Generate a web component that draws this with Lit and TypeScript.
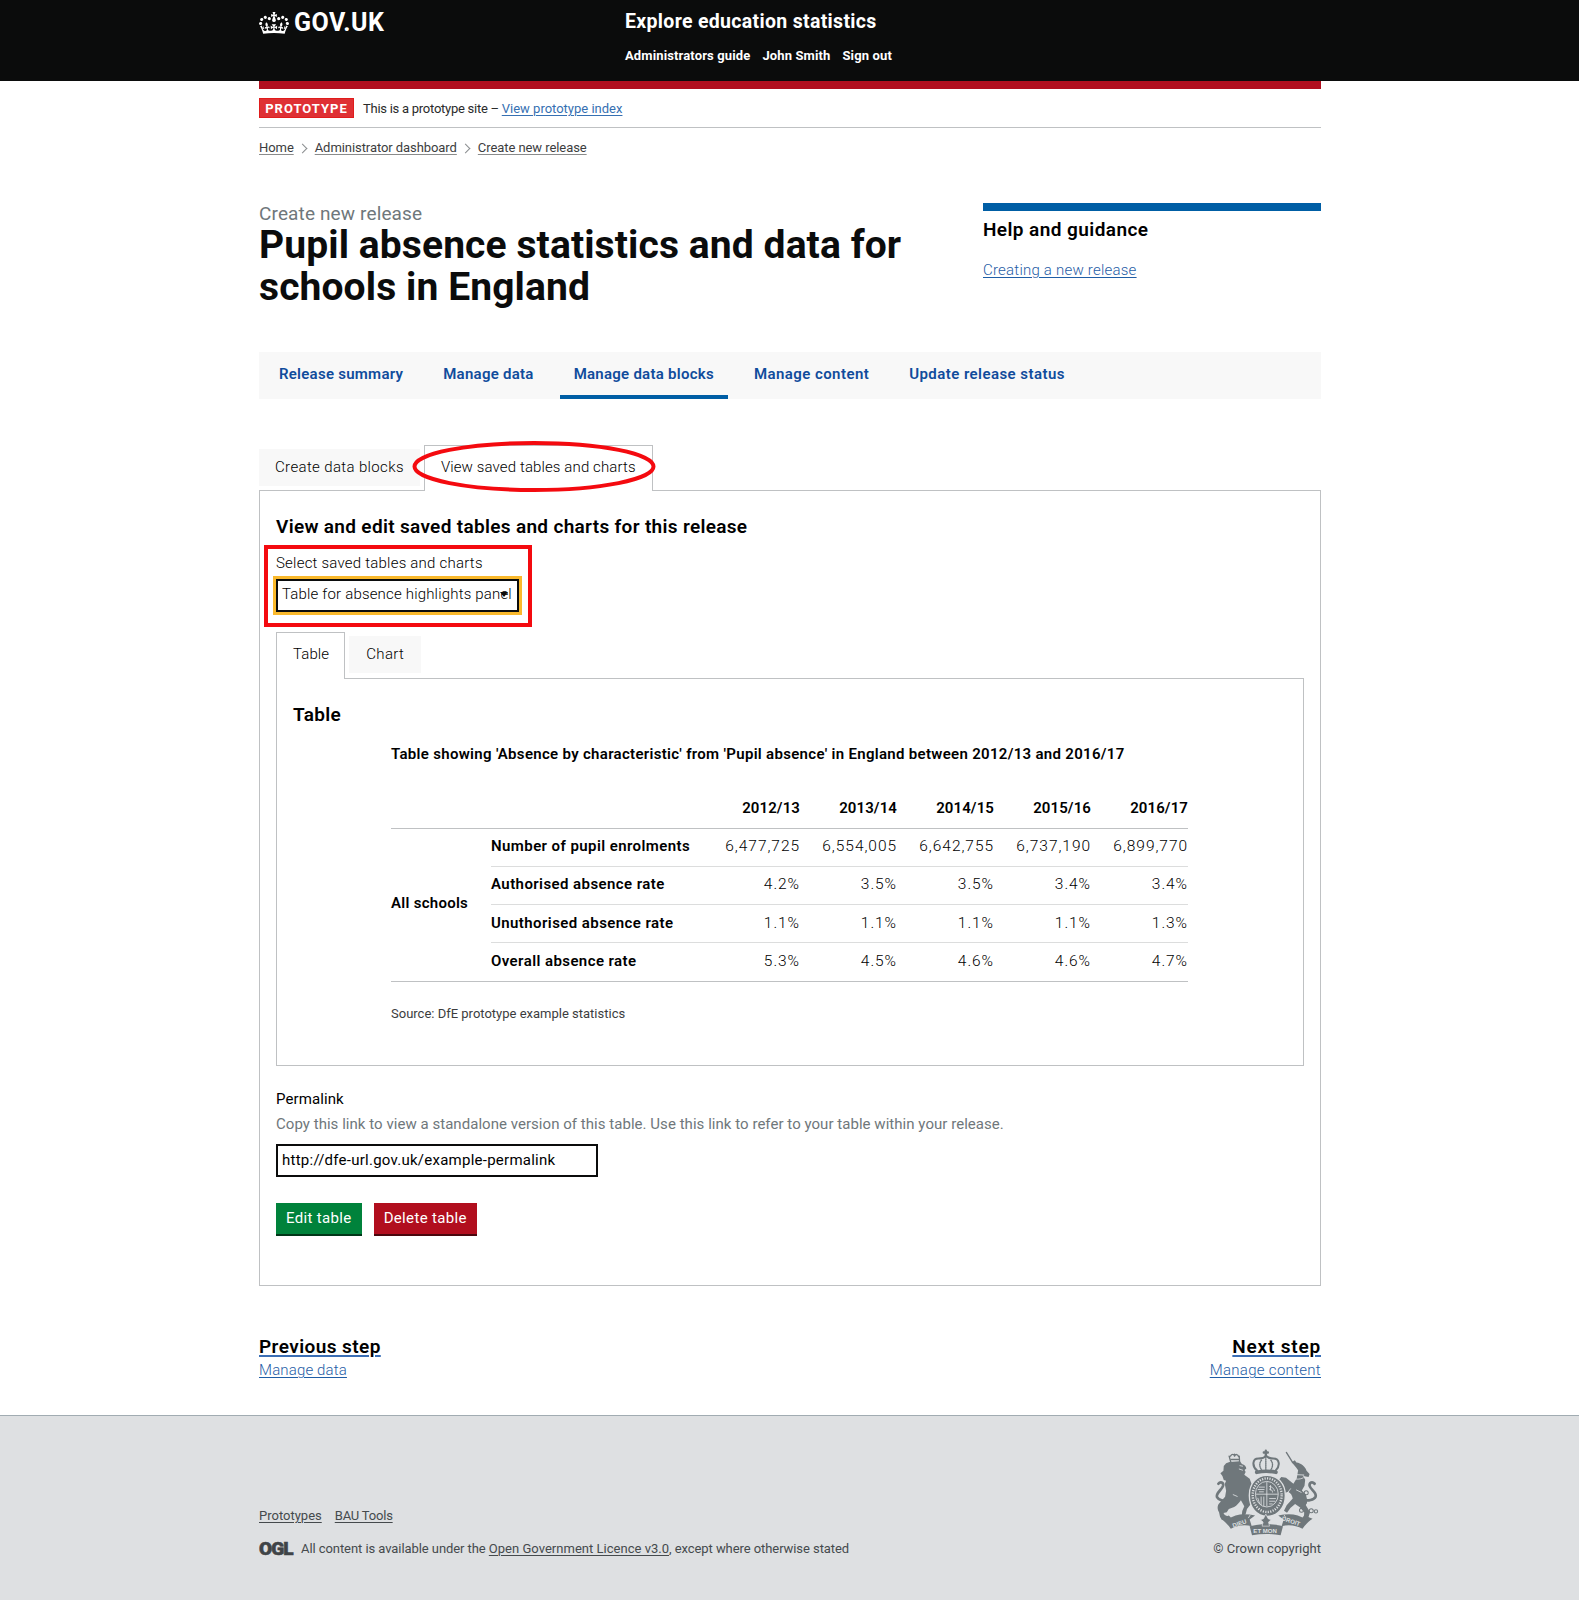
import { LitElement, html, css, svg } from "lit";
import { customElement } from "lit/decorators.js";

const YEARS = ["2012/13", "2013/14", "2014/15", "2015/16", "2016/17"];
const ROWS: [string, string[]][] = [
  ["Number of pupil enrolments", ["6,477,725", "6,554,005", "6,642,755", "6,737,190", "6,899,770"]],
  ["Authorised absence rate", ["4.2%", "3.5%", "3.5%", "3.4%", "3.4%"]],
  ["Unuthorised absence rate", ["1.1%", "1.1%", "1.1%", "1.1%", "1.3%"]],
  ["Overall absence rate", ["5.3%", "4.5%", "4.6%", "4.6%", "4.7%"]],
];
const NAV: [string, string][] = [["Release summary", ""], ["Manage data", ""], ["Manage data blocks", "on"], ["Manage content", "loose"], ["Update release status", "loose"]];

const crown = svg`<path fill="#fff" fill-rule="evenodd" d="M25 30.2c3.5 1.5 7.7-.2 9.1-3.7 1.5-3.6-.2-7.8-3.9-9.2-3.6-1.4-7.6.3-9.1 3.9-1.4 3.5.3 7.5 3.9 9zM9 39.5c3.6 1.5 7.8-.2 9.2-3.7 1.5-3.6-.2-7.8-3.9-9.1-3.6-1.5-7.6.2-9.1 3.8-1.4 3.5.3 7.5 3.8 9zM4.4 57.2c3.5 1.5 7.7-.2 9.1-3.8 1.5-3.6-.2-7.7-3.9-9.1-3.5-1.5-7.6.3-9.1 3.8-1.4 3.5.3 7.6 3.9 9.1zm38.3-21.4c3.5 1.5 7.7-.2 9.1-3.8 1.5-3.6-.2-7.7-3.9-9.1-3.6-1.5-7.6.3-9.1 3.8-1.3 3.6.4 7.7 3.9 9.1zm64.4-5.6c-3.6 1.5-7.8-.2-9.1-3.7-1.5-3.6.2-7.8 3.8-9.2 3.6-1.4 7.7.3 9.2 3.9 1.3 3.5-.4 7.5-3.9 9zm15.9 9.3c-3.6 1.5-7.7-.2-9.1-3.7-1.5-3.6.2-7.8 3.7-9.1 3.6-1.5 7.7.2 9.2 3.8 1.5 3.5-.3 7.5-3.8 9zm4.7 17.7c-3.6 1.5-7.8-.2-9.2-3.8-1.5-3.6.2-7.7 3.9-9.1 3.6-1.5 7.7.3 9.2 3.8 1.3 3.5-.4 7.6-3.9 9.1zM89.3 35.8c-3.6 1.5-7.8-.2-9.2-3.8-1.4-3.6.2-7.7 3.9-9.1 3.6-1.5 7.7.3 9.2 3.8 1.4 3.6-.3 7.7-3.9 9.1zM69.7 17.7l8.9 4.7V9.3l-8.9 2.8c-.2-.3-.5-.6-.9-.9L72.4 0H59.6l3.5 11.2c-.3.3-.6.5-.9.9l-8.8-2.8v13.1l8.8-4.7c.3.3.6.7.9.9l-5 15.4v.1c-.2.8-.4 1.6-.4 2.4 0 4.1 3.1 7.5 7 8.1h.2c.3 0 .7.1 1 .1.4 0 .7 0 1-.1h.2c4-.6 7.1-4.1 7.1-8.1 0-.8-.1-1.7-.4-2.4V34l-5.1-15.4c.4-.2.7-.6 1-.9zM66 92.8c16.9 0 32.8 1.1 47.1 3.2 4-16.9 8.9-26.7 14-33.5l-9.6-3.4c1 4.9 1.1 7.2 0 10.2-1.5-1.4-3-4.3-4.2-8.7L108.6 76c2.8-2 5-3.2 7.5-3.3-4.4 9.4-10 11.9-13.6 11.2-4.3-.8-6.3-4.6-5.6-7.9 1-4.7 5.7-5.9 8-.5 4.3-8.7-3-11.4-7.6-8.8 7.1-7.2 7.9-13.5 2.1-21.1-8 6.1-8.1 12.3-4.5 20.8-4.7-5.4-12.1-2.5-9.5 6.2 3.4-5.2 7.9-2 7.2 3.1-.6 4.3-6.4 7.8-13.5 7.2-10.3-.9-10.9-8-11.2-13.8 2.5-.5 7.1 1.8 11 7.3L80.2 60c-4.1 4.4-8 5.3-12.3 5.4 1.4-4.4 8-11.6 8-11.6H55.5s6.4 7.2 7.9 11.6c-4.2-.1-8-1-12.3-5.4l1.4 16.4c3.9-5.5 8.5-7.7 10.9-7.3-.3 5.8-.9 12.8-11.1 13.8-7.2.6-12.9-2.9-13.5-7.2-.7-5 3.8-8.3 7.1-3.1 2.7-8.7-4.6-11.6-9.4-6.2 3.7-8.5 3.6-14.7-4.6-20.8-5.8 7.6-5 13.9 2.2 21.1-4.7-2.6-11.9.1-7.7 8.8 2.3-5.5 7.1-4.2 8.1.5.7 3.3-1.3 7.1-5.7 7.9-3.5.7-9-1.8-13.5-11.2 2.5.1 4.7 1.3 7.5 3.3l-4.7-15.4c-1.2 4.4-2.7 7.2-4.3 8.7-1.1-3-.9-5.3 0-10.2l-9.5 3.4c5 6.9 9.9 16.7 14 33.5 14.8-2.1 30.8-3.2 47.7-3.2z"/>`;

const crest = svg`
  <g fill="none" stroke="#6f777b" stroke-linecap="round" stroke-linejoin="round">
    <path stroke-width="7" d="M196 60v14M190 65h12"/>
    <path stroke-width="6" d="M170 119c-16-14-14-36 4-36 12 0 20-5 22-8 3 3 10 8 22 8 20 0 21 22 7 36"/>
    <path stroke-width="4" stroke-dasharray="3 3" d="M196 78v38M183 88c-7 8-6 20 0 28M211 88c7 8 6 20 0 28"/>
    <path stroke-width="11" d="M169 124c18-4 39-4 57 0"/>
    <path stroke-width="8" d="M84 206c-12 4-28 2-33-8-5-12 15-22 18-34 2-10-8-14-14-6"/>
    <path stroke-width="8" d="M309 206c12 4 30 0 35-10 4-12-15-20-18-32-1-10 8-14 15-6"/>
    <path stroke-width="4" d="M92 94l-5-18M91 76c4-7 10-7 12 0 3-7 10-6 12 1M103 76v-6M118 94l-1-18M94 86h20"/>
    <path stroke-width="4" d="M257 65l19 30"/>
    <circle cx="311" cy="212" r="6" stroke-width="3"/><circle cx="302" cy="237" r="6" stroke-width="3"/>
    <circle cx="318" cy="246" r="6" stroke-width="3"/><circle cx="331" cy="238" r="6" stroke-width="3"/>
    <circle cx="345" cy="240" r="5" stroke-width="3"/><circle cx="316" cy="185" r="6" stroke-width="3"/>
  </g>
  <g fill="#6f777b">
    <path d="M88 93l31-2 6 8c8 2 13 8 13 14l-5 4 3 6-4 8 16 12 8 22 8 4-4 12-14-6 6 18-6 8 8 14-14 18-4 16-12 6 2-16 6-14-10-18c-6 8-12 16-20 20l-16 6-6 10-10 2 4 6 10 4 2 8-20 2-6-8-3-14c-6-10-5-20 0-26l18-20 3-18-4-20 4-10-7-2-4-12-6-8 9-8 1-14 7-8z"/>
    <path d="M273 94l9-6 5 7c14 2 26 12 30 24l9 10-3 9-12-2-6-4 8 14-2 18-8 14 12 12 4 16-4 16 12 20-6 22h-16l4-10 2-10-14-16-14-10-14 12-10 14-9-6 8-16 18-20c-2-10-6-16-14-20l-16 6-14-4-4-30 14-16 14 2 22 18 10-16 4-24-6-8z"/>
    <path stroke="#dee0e2" stroke-width="4" d="M200 133c31 0 54 24 54 60s-23 62-54 62-53-26-53-62 22-60 53-60z"/>
    <path d="M62 262l24-10 6 6 14-6c18-5 38-4 58 0l-16 12 6 20c-22-6-44-2-62 8-8-12-18-22-30-30z"/>
    <path d="M335 262l-24-10-6 6-14-6c-18-5-38-4-58 0l16 12-6 20c22-6 44-2 62 8 8-12 18-22 30-30z"/>
    <path d="M148 284c30-8 68-8 99 0l-7 27c-28-5-57-5-85 0z"/>
    <path stroke="#dee0e2" stroke-width="2" d="M196 248l7 14 9 3-8 7 3 12h-22l3-12-8-7 9-3z"/>
  </g>
  <g fill="none" stroke="#dee0e2">
    <ellipse cx="199" cy="189" rx="34" ry="38" stroke-width="2.5"/>
    <ellipse cx="200" cy="192" rx="43" ry="50" stroke-width="7" stroke-dasharray="3.5 4"/>
    <path stroke-width="2.5" d="M199 153v72M166 189h66M175 168h18M172 175h20M176 182h14M206 166c8 0 14 6 16 14M206 174c6 0 10 4 10 10M210 162v16M172 200l6 18M182 196v26M190 196v28M206 202h20M206 210h18M206 218h10"/>
    <path stroke-width="2.5" d="M118 104l10 2M116 114l12 4M98 190l14 6M103 232l18-14M270 138c12 8 26 8 38 2M266 130l44 2M286 176l16 8M270 172l-10 14M150 250l-6 10M250 250l6 10"/>
  </g>
  <g class="motto" fill="#dee0e2">
    <text transform="rotate(-18 118 275)" x="96" y="282">DIEU</text>
    <text x="159" y="305">ET MON</text>
    <text transform="rotate(18 272 275)" x="241" y="276">DROIT</text>
  </g>`;

@customElement("app-root")
export class AppRoot extends LitElement {
  static styles = css`
    :host { display: block; height: 1600px; background: #fff; color: #000; font: 300 15px/20px Roboto, "Liberation Sans", sans-serif; }
    * { box-sizing: border-box; }
    h1, h2, p { margin: 0; }
    .wrap { width: 1062px; margin-left: 259px; }
    .header { height: 81px; background: #0b0c0c; color: #fff; }
    .header .wrap { display: flex; }
    .logo { width: 366px; display: flex; padding-top: 12px; }
    .crown { width: 30px; height: 22px; }
    .word { margin-left: 5px; font: 700 25px/22px Roboto, sans-serif; letter-spacing: .5px; }
    .service { padding-top: 10px; }
    .name { font: 700 19.5px/24px Roboto, sans-serif; letter-spacing: .32px; }
    .user { display: flex; gap: 12px; margin-top: 12px; font: 700 13px/20px Roboto, sans-serif; letter-spacing: .13px; }
    a { color: #1f5da6; text-decoration: underline; text-decoration-thickness: 1px; text-underline-offset: 2px; }
    .phase, .crumbs, .source, .caption, .plink, .hint, .input, .footer { font-weight: 400; }
    .phase { display: flex; border-top: 8px solid #b10e1e; border-bottom: 1px solid #bfc1c3; padding: 9px 0; font-size: 13px; color: #2a2b2b; }
    .phase a { color: #3670b2; }
    .tag { width: 95px; margin-right: 9px; text-align: center; background: #df3034; border: 1px solid #e01c1c; color: #fff; font-weight: 700; line-height: 19px; height: 20px; letter-spacing: 1px; }
    .proto { padding-top: 1px; height: 20px; letter-spacing: -.26px; }
    .proto a { letter-spacing: 0; }
    .crumbs { display: flex; margin-top: 10px; font-size: 13px; letter-spacing: -.07px; }
    .crumbs a { color: #3c3d3e; text-decoration-color: #8a8b8b; }
    .chev { width: 7px; height: 7px; margin: 7px 9px 0 5px; border: solid #8a8d8f; border-width: 1px 1px 0 0; transform: rotate(45deg); }
    .top { display: flex; justify-content: space-between; margin-top: 44px; height: 106px; }
    .caption { font-size: 19px; line-height: 24px; height: 23px; color: #6f777b; letter-spacing: .13px; }
    h1 { font-size: 39px; line-height: 41.5px; font-weight: 700; letter-spacing: .1px; width: 690px; color: #0b0c0c; }
    h2 { font-size: 19px; line-height: 24px; font-weight: 600; letter-spacing: .32px; }
    .help { width: 338px; margin-top: 1px; border-top: 8px solid #005ea5; padding-top: 7px; letter-spacing: .22px; }
    .help h2 { letter-spacing: .42px; }
    .help a { display: inline-block; margin-top: 18px; }
    .nav { display: flex; gap: 12px; margin-top: 44px; height: 47px; padding-left: 6px; background: #f8f8f8; font-weight: 600; color: #104c9c; letter-spacing: .26px; }
    .nav span { padding: 12px 14px 0; border-bottom: 4px solid transparent; }
    .nav .on { border-color: #005ea5; }
    .nav .loose { letter-spacing: .44px; }
    .tabs { display: flex; gap: 4px; }
    .tab { height: 37px; margin-top: 4px; padding: 8px 16px 0; background: #f8f8f8; white-space: nowrap; letter-spacing: .36px; }
    .tab.on { height: 46px; margin: 0 0 -1px; padding-top: 11px; border: 1px solid #bfc1c3; border-bottom: 0; background: #fff; z-index: 1; letter-spacing: .12px; }
    .outer { margin-top: 46px; position: relative; }
    .outer > .tabs { height: 45px; }
    .panel { border: 1px solid #bfc1c3; height: 796px; padding: 24px 16px 0; }
    .label { margin-top: 14px; letter-spacing: .22px; }
    .select { width: 243px; height: 33px; margin-top: 6px; padding: 3px 4px 0; border: 2px solid #0b0c0c; outline: 3px solid #fab92c; position: relative; white-space: nowrap; letter-spacing: .18px; }
    .arrow { position: absolute; right: 9px; top: 11px; border: 4px solid transparent; border-top: 5px solid #0b0c0c; border-bottom: 0; }
    .inner { margin-top: 20px; }
    .inner .tabs { height: 46px; }
    .inner .tab.on { height: 47px; padding-right: 15px; }
    .inner .chart { padding: 8px 17px 0; letter-spacing: .35px; }
    .inner .panel { height: 388px; }
    figure { margin: 17px 0 0 98px; width: 797px; }
    .strong, th { font-weight: 600; letter-spacing: .31px; text-align: left; }
    table { table-layout: fixed; border-spacing: 0; width: 797px; margin-top: 26px; }
    th, td { padding: 7px 0 0; height: 38px; vertical-align: top; border-bottom: 1px solid #dcdddd; }
    th { letter-spacing: .42px; }
    thead th { height: 39px; padding-top: 8px; letter-spacing: .1px; }
    thead th, th.last, td.last, .all { border-color: #bfc1c3; }
    .low { padding-top: 8px; }
    .last { height: 39px; }
    .all { vertical-align: middle; padding: 0 0 4px; letter-spacing: .28px; }
    .num { text-align: right; }
    td { font-size: 15.5px; letter-spacing: .95px; }
    .c1 { width: 100px; } .c2 { width: 212px; }
    .source { margin-top: 22px; font-size: 13px; color: #3c3d3e; }
    .plink { margin-top: 23px; letter-spacing: .1px; }
    .hint { margin-top: 5px; color: #6f777b; letter-spacing: .04px; white-space: nowrap; }
    .input { width: 322px; height: 33px; margin-top: 10px; border: 2px solid #0b0c0c; padding: 4px 4px 0; letter-spacing: .25px; }
    .buttons { display: flex; gap: 12px; margin-top: 26px; letter-spacing: .34px; font-weight: 400; }
    .btn { height: 33px; padding: 5px 10px 0; color: #fff; background: #00823b; border-bottom: 2px solid #003618; white-space: nowrap; }
    .btn.red { background: #b10e1e; border-color: #4b060d; }
    .steps { display: flex; justify-content: space-between; margin-top: 48px; letter-spacing: .15px; }
    .steps .r { text-align: right; letter-spacing: .3px; }
    .steps h2 { text-decoration: underline #3a6eb5 2px; text-underline-offset: 2px; line-height: 25px; margin-bottom: 1px; letter-spacing: .42px; }
    .steps .r h2 { letter-spacing: .8px; }
    .footer { margin-top: 35px; height: 185px; border-top: 1px solid #a1acb2; background: #dee0e2; font-size: 13px; color: #454a4d; }
    .footer .wrap { display: flex; justify-content: space-between; padding-top: 33px; }
    .footer a { color: #454a4d; }
    .fl { padding-top: 57px; }
    .links { display: flex; gap: 13px; }
    .bau { letter-spacing: -.2px; }
    .lic { display: flex; margin-top: 13px; letter-spacing: -.07px; }
    .lic a { letter-spacing: .02px; }
    .ogl { width: 42px; font: 900 19px/20px Roboto, sans-serif; letter-spacing: -.9px; color: #3f4447; -webkit-text-stroke: .6px #3f4447; }
    .fr { display: flex; flex-direction: column; align-items: flex-end; }
    .crest { width: 106px; height: 87px; margin-bottom: 3px; margin-right: 1px; }
    .motto { font: 700 18px "Liberation Sans", sans-serif; }
    .mark { position: absolute; }
    .mark.rect { left: 5px; top: 100px; width: 268px; height: 82px; border: 4px solid #f40a0f; }
    .mark.oval { left: 153px; top: -5px; width: 244px; height: 53px; z-index: 2; }
  `;
  render() {
    return html`
      <div class="header"><div class="wrap">
        <div class="logo"><svg class="crown" viewBox="0 0 132 97">${crown}</svg><span class="word">GOV.UK</span></div>
        <div class="service"><div class="name">Explore education statistics</div>
          <div class="user"><span>Administrators guide</span><span>John Smith</span><span>Sign out</span></div></div>
      </div></div>
      <div class="wrap">
        <div class="phase"><span class="tag">PROTOTYPE</span><span class="proto">This is a prototype site – <a>View prototype index</a></span></div>
        <div class="crumbs"><a>Home</a><i class="chev"></i><a>Administrator dashboard</a><i class="chev"></i><a>Create new release</a></div>
        <div class="top">
          <div><div class="caption">Create new release</div><h1>Pupil absence statistics and data for schools in England</h1></div>
          <div class="help"><h2>Help and guidance</h2><a>Creating a new release</a></div>
        </div>
        <div class="nav">${NAV.map(([name, cls]) => html`<span class=${cls}>${name}</span>`)}</div>
        <div class="outer">
          <div class="tabs"><div class="tab">Create data blocks</div><div class="tab on">View saved tables and charts</div></div>
          <div class="panel">
            <h2>View and edit saved tables and charts for this release</h2>
            <p class="label">Select saved tables and charts</p>
            <div class="select">Table for absence highlights panel<i class="arrow"></i></div>
            <div class="inner">
              <div class="tabs"><div class="tab on">Table</div><div class="tab chart">Chart</div></div>
              <div class="panel">
                <h2>Table</h2>
                <figure>
                  <div class="strong">Table showing 'Absence by characteristic' from 'Pupil absence' in England between 2012/13 and 2016/17</div>
                  <table>
                    <thead><tr><th class="c1"></th><th class="c2"></th>${YEARS.map((y) => html`<th class="num">${y}</th>`)}</tr></thead>
                    <tbody>${ROWS.map(([name, vals], i) => {
                      const row = i === 3 ? "low last" : i === 2 ? "low" : "";
                      return html`<tr>${i === 0 ? html`<th class="all" rowspan="4">All schools</th>` : ""}<th class=${row}>${name}</th>${vals.map((v) => html`<td class="num ${row}">${v}</td>`)}</tr>`;
                    })}</tbody>
                  </table>
                  <p class="source">Source: DfE prototype example statistics</p>
                </figure>
              </div>
            </div>
            <p class="plink">Permalink</p>
            <p class="hint">Copy this link to view a standalone version of this table. Use this link to refer to your table within your release.</p>
            <div class="input">http://dfe-url.gov.uk/example-permalink</div>
            <div class="buttons"><span class="btn">Edit table</span><span class="btn red">Delete table</span></div>
          </div>
          <div class="mark rect"></div>
          <svg class="mark oval" viewBox="0 0 244 53"><ellipse cx="122" cy="26.5" rx="119.5" ry="23.5" fill="none" stroke="#f40a0f" stroke-width="4"/></svg>
        </div>
        <div class="steps">
          <div><h2>Previous step</h2><a>Manage data</a></div>
          <div class="r"><h2>Next step</h2><a>Manage content</a></div>
        </div>
      </div>
      <div class="footer"><div class="wrap">
        <div class="fl"><div class="links"><a>Prototypes</a><a class="bau">BAU Tools</a></div>
          <div class="lic"><span class="ogl">OGL</span><span>All content is available under the <a>Open Government Licence v3.0</a>, except where otherwise stated</span></div></div>
        <div class="fr"><svg class="crest" viewBox="42 55 315 258">${crest}</svg><span>© Crown copyright</span></div>
      </div></div>`;
  }
}
